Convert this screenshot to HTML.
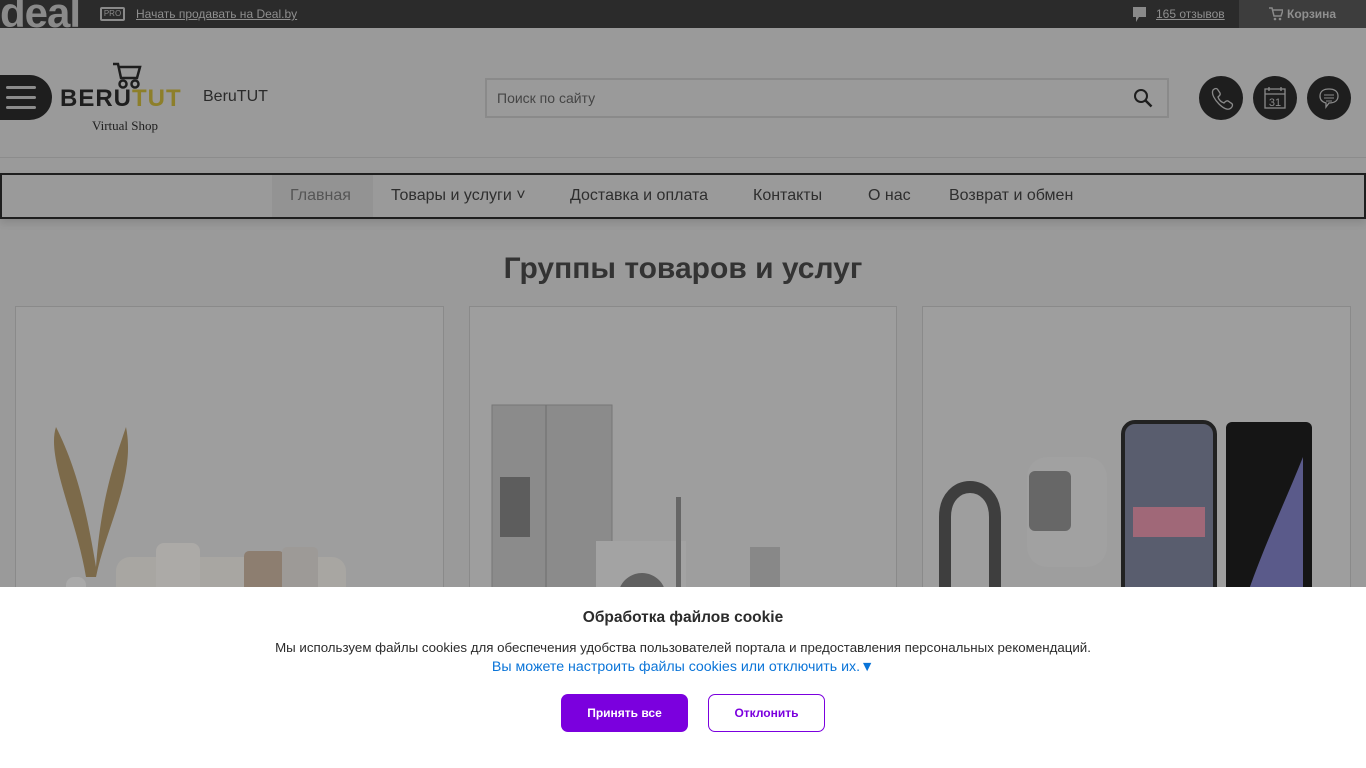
<!DOCTYPE html>
<html><head><meta charset="utf-8"><style>
*{box-sizing:border-box;margin:0;padding:0}
body{width:1366px;height:768px;overflow:hidden;background:#9a9a9a;font-family:"Liberation Sans",sans-serif;position:relative;color:#2a2a2a}
.top{position:absolute;left:0;top:0;width:1366px;height:28px;background:#2b2b2b;overflow:hidden}
.top .deal{position:absolute;left:0;top:-10px;font:bold 42px "Liberation Sans",sans-serif;color:#8a8a8a;letter-spacing:-1px;line-height:46px}
.pro{position:absolute;left:100px;top:7px;width:25px;height:14px;border:2px solid #8a8a8a;border-radius:2px;font-size:8px;color:#8a8a8a;text-align:center;line-height:10px}
.sell{position:absolute;left:136px;top:7px;font-size:12px;color:#8f8f8f;text-decoration:underline}
.rev{position:absolute;left:1156px;top:7px;font-size:12px;color:#8f8f8f;text-decoration:underline}
.cart{position:absolute;left:1239px;top:0;width:127px;height:28px;background:#3d3d3d;color:#8f8f8f;font-size:12px;font-weight:bold;line-height:28px;padding-left:48px}
.hline{position:absolute;left:0;top:157px;width:1366px;height:1px;background:#8c8c8c}
.burger{position:absolute;left:-10px;top:75px;width:62px;height:45px;background:#1e1e1e;border-radius:0 23px 23px 0}
.burger i{position:absolute;left:16px;width:30px;height:3px;background:#8c8c8c;border-radius:2px}
.logo{position:absolute;left:60px;top:85px;font:900 24px "Liberation Sans",sans-serif;letter-spacing:1px}
.vs{position:absolute;left:92px;top:118px;font:13px "Liberation Serif",serif;color:#1e1e1e}
.brand{position:absolute;left:203px;top:88px;font-size:16px;color:#2a2a2a}
.search{position:absolute;left:485px;top:78px;width:684px;height:40px;border:2px solid #8a8a8a;font-size:14px;color:#454545;padding:10px 0 0 10px}
.circ{position:absolute;top:76px;width:44px;height:44px;border-radius:50%;background:#1e1e1e}
.nav{position:absolute;left:0;top:173px;width:1366px;height:46px;border:2px solid #1e1e1e;box-shadow:0 4px 8px rgba(0,0,0,.12)}
.nav span{position:absolute;top:12px;font-size:16px;color:#2e2e2e}
.act{position:absolute;left:270px;top:0;width:101px;height:42px;background:#939393}
h1{position:absolute;left:0;width:1366px;top:252px;text-align:center;font-size:30px;font-weight:bold;color:#333}
.card{position:absolute;top:306px;height:300px;border:1px solid #8a8a8a;background:#9e9e9e;overflow:hidden}
.ck{position:absolute;left:0;top:587px;width:1366px;height:181px;background:#fff;text-align:center}
.ck h2{position:absolute;top:22px;width:100%;font-size:15.5px;color:#2b2b2b}
.ck p{position:absolute;top:53px;width:100%;font-size:13.3px;color:#2b2b2b}
.ck .lk{top:72px;color:#0a74d8;font-size:14.2px}
.b1{position:absolute;left:561px;top:107px;width:127px;height:38px;background:#7b00de;border-radius:7px;color:#fff;font-size:12px;font-weight:bold;line-height:38px}
.b2{position:absolute;left:708px;top:107px;width:117px;height:38px;border:1px solid #7b00de;border-radius:7px;color:#7b00de;font-size:12px;font-weight:bold;line-height:36px}
</style></head><body>
<div class="top"><div class="deal">deal</div><div class="pro">PRO</div><div class="sell">Начать продавать на Deal.by</div>
<svg style="position:absolute;left:1133px;top:7px" width="13" height="16"><path d="M0 0h13v10H6l-3 5v-5H0z" fill="#8a8a8a"/></svg>
<div class="rev">165 отзывов</div>
<div class="cart"><svg style="position:absolute;left:30px;top:7px" width="14" height="14"><path d="M0 1h3l2 8h7l2-6H4" fill="none" stroke="#8a8a8a" stroke-width="1.5"/><circle cx="6" cy="12" r="1.3" fill="#8a8a8a"/><circle cx="11" cy="12" r="1.3" fill="#8a8a8a"/></svg>Корзина</div></div>
<div class="burger"><i style="top:11px"></i><i style="top:21px"></i><i style="top:31px"></i></div>
<svg style="position:absolute;left:112px;top:62px" width="30" height="28"><path d="M1 2h5l3 14h16l3-11H7" fill="none" stroke="#1e1e1e" stroke-width="2.5"/><circle cx="11" cy="22" r="3.5" fill="none" stroke="#1e1e1e" stroke-width="2.5"/><circle cx="23" cy="22" r="3.5" fill="none" stroke="#1e1e1e" stroke-width="2.5"/></svg>
<div class="logo"><span style="color:#1e1e1e">BERU</span><span style="color:#8d7f2a">TUT</span></div>
<div class="vs">Virtual Shop</div>
<div class="brand">BeruTUT</div>
<div class="search">Поиск по сайту<svg style="position:absolute;right:14px;top:8px" width="20" height="20"><circle cx="8" cy="8" r="6" fill="none" stroke="#1e1e1e" stroke-width="2"/><path d="M12.5 12.5l6 6" stroke="#1e1e1e" stroke-width="2.5"/></svg></div>
<div class="circ" style="left:1199px"><svg width="44" height="44"><path d="M14 14c2-2 4-2 5 0l2 3c1 2-1 3-2 4 1 3 3 5 6 6 1-1 2-3 4-2l3 2c2 1 2 3 0 5-3 3-8 0-12-4s-8-10-6-14z" fill="none" stroke="#8a8a8a" stroke-width="1.3"/></svg></div>
<div class="circ" style="left:1253px"><svg width="44" height="44"><rect x="12" y="13" width="20" height="19" fill="none" stroke="#8a8a8a" stroke-width="1.3"/><path d="M12 18h20M16 11v4M28 11v4" stroke="#8a8a8a" stroke-width="1.3"/><text x="22" y="30" font-size="11" fill="#8a8a8a" text-anchor="middle" font-family="Liberation Sans">31</text></svg></div>
<div class="circ" style="left:1307px"><svg width="44" height="44"><path d="M13 20c0-5 4-7 9-7s9 2 9 7-4 7-9 7l-3 4v-4c-4-1-6-3-6-7z" fill="none" stroke="#8a8a8a" stroke-width="1.3"/><path d="M17 19h10M17 22h10M19 25h6" stroke="#8a8a8a" stroke-width="1"/></svg></div>
<div class="hline"></div>
<div class="nav"><div class="act"></div>
<span style="left:288px;color:#555">Главная</span><span style="left:389px">Товары и услуги ˅</span><span style="left:568px">Доставка и оплата</span><span style="left:751px">Контакты</span><span style="left:866px">О нас</span><span style="left:947px">Возврат и обмен</span></div>
<h1>Группы товаров и услуг</h1>
<div class="card" style="left:15px;width:429px">
<svg width="429" height="300"><path d="M70 270c-10-60-40-120-30-150 20 40 30 80 40 140 5-70 20-110 30-140 10 50-20 100-30 150z" fill="#7c6a4a"/><rect x="100" y="250" width="230" height="60" rx="14" fill="#a8a6a2"/><rect x="140" y="236" width="44" height="60" rx="8" fill="#acaaa7"/><rect x="228" y="244" width="40" height="60" rx="5" fill="#8d7e70"/><rect x="266" y="240" width="36" height="60" rx="5" fill="#9d9a97"/><rect x="50" y="270" width="20" height="30" rx="8" fill="#aaa"/></svg></div>
<div class="card" style="left:469px;width:428px">
<svg width="428" height="300"><rect x="22" y="98" width="120" height="210" fill="#8b8b8b" stroke="#777"/><line x1="76" y1="98" x2="76" y2="300" stroke="#6e6e6e"/><rect x="30" y="170" width="30" height="60" fill="#5d5d5d"/><rect x="126" y="234" width="90" height="80" fill="#a3a3a3"/><circle cx="172" cy="290" r="24" fill="#606060"/><rect x="206" y="190" width="5" height="110" fill="#666"/><rect x="280" y="240" width="30" height="60" fill="#888"/></svg></div>
<div class="card" style="left:922px;width:429px">
<svg width="429" height="300"><path d="M22 290v-80c0-40 50-40 50 0v80" fill="none" stroke="#3e3e3e" stroke-width="12"/><rect x="106" y="164" width="42" height="60" rx="6" fill="#2a2a2a"/><rect x="104" y="150" width="80" height="110" rx="20" fill="#a4a4a4" opacity=".5"/><rect x="200" y="115" width="92" height="200" rx="12" fill="#595d6e" stroke="#222" stroke-width="4"/><rect x="210" y="200" width="72" height="30" fill="#a06878"/><rect x="303" y="115" width="86" height="200" rx="6" fill="#151515"/><path d="M320 300c20-60 40-100 60-150v150z" fill="#5a5a8a"/></svg></div>
<div class="ck"><h2>Обработка файлов cookie</h2>
<p>Мы используем файлы cookies для обеспечения удобства пользователей портала и предоставления персональных рекомендаций.</p>
<p class="lk">Вы можете настроить файлы cookies или отключить их.▼</p>
<div class="b1">Принять все</div><div class="b2">Отклонить</div></div>
</body></html>
